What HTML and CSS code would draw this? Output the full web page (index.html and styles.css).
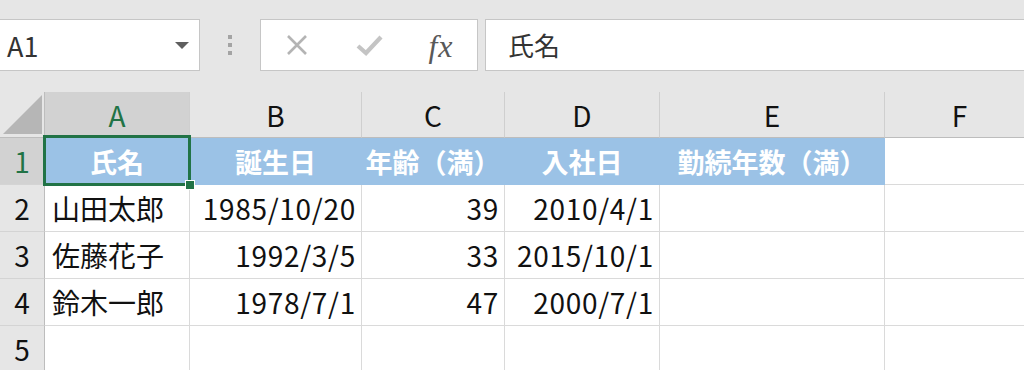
FILE: index.html
```html
<!DOCTYPE html>
<html lang="ja">
<head>
    <meta charset="UTF-8">
    <meta name="viewport" content="width=device-width, initial-scale=1.0">
    <title>社員名簿</title>
    <link rel="stylesheet" href="styles.css">
</head>
<body>

    <div class="bar">
        <div class="name-box">
            <span>A1</span>
            <svg class="drop" width="14" height="7" viewBox="0 0 14 7"><path d="M0 0H14L7 7Z" fill="#5f5f5f"/></svg>
        </div>
        <div class="grip"><i></i><i></i><i></i></div>
        <div class="fx-buttons">
            <span class="slot">
                <svg width="22" height="20" viewBox="0 0 22 20"><path d="M2 1L20 19M20 1L2 19" stroke="#b4b4b4" stroke-width="2.6" fill="none"/></svg>
            </span>
            <span class="slot">
                <svg width="27" height="22" viewBox="0 0 27 22"><path d="M2 12L10 19L25 3" stroke="#c4c4c4" stroke-width="4.2" fill="none"/></svg>
            </span>
            <span class="slot fx">fx</span>
        </div>
        <div class="formula">氏名</div>
    </div>

    <div class="sheet">
        <div class="corner"><svg width="39" height="39" viewBox="0 0 39 39"><path d="M0 39H39V0Z" fill="#b6b6b6"/></svg></div>
        <div class="col on">A</div>
        <div class="col">B</div>
        <div class="col">C</div>
        <div class="col">D</div>
        <div class="col">E</div>
        <div class="col">F</div>

        <div class="row on">1</div>
        <div class="cell head sel">氏名<span class="handle"></span></div>
        <div class="cell head">誕生日</div>
        <div class="cell head">年齢（満）</div>
        <div class="cell head">入社日</div>
        <div class="cell head">勤続年数（満）</div>
        <div class="cell"></div>

        <div class="row">2</div>
        <div class="cell">山田太郎</div>
        <div class="cell num">1985/10/20</div>
        <div class="cell num">39</div>
        <div class="cell num">2010/4/1</div>
        <div class="cell"></div>
        <div class="cell"></div>

        <div class="row">3</div>
        <div class="cell">佐藤花子</div>
        <div class="cell num">1992/3/5</div>
        <div class="cell num">33</div>
        <div class="cell num">2015/10/1</div>
        <div class="cell"></div>
        <div class="cell"></div>

        <div class="row">4</div>
        <div class="cell">鈴木一郎</div>
        <div class="cell num">1978/7/1</div>
        <div class="cell num">47</div>
        <div class="cell num">2000/7/1</div>
        <div class="cell"></div>
        <div class="cell"></div>

        <div class="row">5</div>
        <div class="cell"></div>
        <div class="cell"></div>
        <div class="cell"></div>
        <div class="cell"></div>
        <div class="cell"></div>
        <div class="cell"></div>
    </div>

</body>
</html>
```

FILE: styles.css
```css
:root
{
    --chrome: #e6e6e6;
    --picked: #d2d2d2;
    --green: #217346;
    --fill: #9bc2e6;
    --grid: #dadada;
}

*
{
    margin: 0px;
    padding: 0px;
    box-sizing: border-box;
}

body
{
    width: 1024px;
    height: 370px;
    overflow: hidden;
    background-color: var(--chrome);
    font-family: "Noto Sans CJK JP", "Noto Sans", sans-serif;
    color: #111;
}

/* formula bar */

.bar
{
    display: flex;
    align-items: center;
    height: 92px;
    padding-top: 19px;
    padding-bottom: 21px;
}

.name-box
{
    display: flex;
    align-items: center;
    justify-content: space-between;
    width: 200px;
    height: 52px;
    padding: 0px 10px 0px 7px;
    background-color: #fff;
    border: solid 1px #c6c6c6;
    border-left: none;
    font-size: 27px;
    color: #333;
}

.grip
{
    display: flex;
    flex-flow: column nowrap;
    align-items: center;
    gap: 4px;
    width: 60px;
}

.grip > i
{
    width: 4px;
    height: 4px;
    background-color: #a4a4a4;
}

.fx-buttons
{
    display: flex;
    width: 218px;
    height: 52px;
    background-color: #fff;
    border: solid 1px #c6c6c6;
}

.slot
{
    display: flex;
    justify-content: center;
    align-items: center;
    width: 72px;
}

.fx
{
    font-family: "Liberation Serif", serif;
    font-style: italic;
    font-size: 32px;
    color: #595959;
    padding-top: 2px;
    letter-spacing: 1px;
}

.formula
{
    flex: 1;
    height: 52px;
    margin-left: 7px;
    margin-right: -4px;
    padding-left: 22px;
    line-height: 50px;
    background-color: #fff;
    border: solid 1px #c6c6c6;
    font-size: 26px;
    color: #333;
}

/* sheet */

.sheet
{
    display: grid;
    grid-template-columns: 45px 145px 172px 143px 155px 225px 150px;
    grid-template-rows: 46px repeat(5, 47px);
    background-color: #fff;
    font-size: 28px;
}

.corner
{
    display: flex;
    align-items: flex-end;
    justify-content: flex-end;
    padding: 0px 2px 3px 0px;
    background-color: var(--chrome);
    border-right: solid 1px #bdbdbd;
    border-bottom: solid 1px #bdbdbd;
}

.col
{
    display: flex;
    justify-content: center;
    align-items: center;
    background-color: var(--chrome);
    border-right: solid 1px #cfcfcf;
    border-bottom: solid 1px #bdbdbd;
}

.row
{
    display: flex;
    justify-content: center;
    align-items: center;
    background-color: var(--chrome);
    border-right: solid 1px #bdbdbd;
    border-bottom: solid 1px #d4d4d4;
}

.col.on, .row.on
{
    background-color: var(--picked);
    color: var(--green);
}

.cell
{
    display: flex;
    align-items: center;
    padding: 0px 6px 0px 7px;
    border-right: solid 1px var(--grid);
    border-bottom: solid 1px var(--grid);
    white-space: nowrap;
}

.num
{
    justify-content: flex-end;
    letter-spacing: 0.7px;
    padding-right: 5px;
}

.head
{
    justify-content: center;
    padding: 0px;
    background-color: var(--fill);
    border-color: var(--fill);
    color: #fff;
    font-weight: bold;
    font-size: 27px;
}

/* active cell outline */

.sel
{
    position: relative;
}

.sel::before
{
    content: "";
    position: absolute;
    top: -3px;
    left: -2px;
    right: -2px;
    bottom: -2px;
    border: solid 3px var(--green);
}

.handle
{
    position: absolute;
    right: -6px;
    bottom: -6px;
    width: 10px;
    height: 10px;
    background-color: var(--green);
    border: solid 1px #fff;
}
```
